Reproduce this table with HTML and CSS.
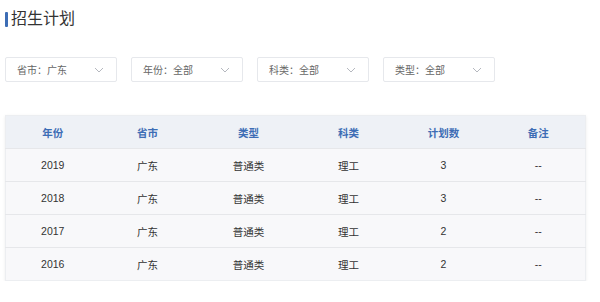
FILE: index.html
```html
<!DOCTYPE html>
<html lang="zh">
<head>
<meta charset="utf-8">
<link rel="stylesheet" href="styles.css">
</head>
<body>
<div class="page">
  <h1 class="title">招生计划</h1>
  <div class="filters">
    <div class="select"><span>省市：广东</span><svg class="chev" viewBox="0 0 10 6" width="10" height="6"><path d="M1 1l4 4 4-4" fill="none" stroke="#b5b8bf" stroke-width="1"/></svg></div>
    <div class="select"><span>年份：全部</span><svg class="chev" viewBox="0 0 10 6" width="10" height="6"><path d="M1 1l4 4 4-4" fill="none" stroke="#b5b8bf" stroke-width="1"/></svg></div>
    <div class="select"><span>科类：全部</span><svg class="chev" viewBox="0 0 10 6" width="10" height="6"><path d="M1 1l4 4 4-4" fill="none" stroke="#b5b8bf" stroke-width="1"/></svg></div>
    <div class="select"><span>类型：全部</span><svg class="chev" viewBox="0 0 10 6" width="10" height="6"><path d="M1 1l4 4 4-4" fill="none" stroke="#b5b8bf" stroke-width="1"/></svg></div>
  </div>
  <table class="plan">
    <colgroup>
      <col class="c-a"><col class="c-b"><col class="c-c"><col class="c-a"><col class="c-b"><col class="c-a">
    </colgroup>
    <thead>
      <tr><th>年份</th><th>省市</th><th>类型</th><th>科类</th><th>计划数</th><th>备注</th></tr>
    </thead>
    <tbody>
      <tr><td>2019</td><td>广东</td><td>普通类</td><td>理工</td><td>3</td><td>--</td></tr>
      <tr><td>2018</td><td>广东</td><td>普通类</td><td>理工</td><td>3</td><td>--</td></tr>
      <tr><td>2017</td><td>广东</td><td>普通类</td><td>理工</td><td>2</td><td>--</td></tr>
      <tr><td>2016</td><td>广东</td><td>普通类</td><td>理工</td><td>2</td><td>--</td></tr>
    </tbody>
  </table>
</div>
</body>
</html>
```

FILE: styles.css
```css
* { box-sizing: border-box; }
html, body { margin: 0; padding: 0; background: #fff; }
body {
  font-family: "Liberation Sans", "Noto Sans CJK SC", sans-serif;
  color: #333;
}
.page { padding: 9px 15px 0 5px; }
.title {
  margin: 0;
  font-size: 16px;
  font-weight: normal;
  line-height: 20px;
  color: #333;
  display: flex;
  align-items: center;
  gap: 3px;
}
.title::before {
  content: "";
  width: 3px;
  height: 15px;
  background: #3d6db5;
  border-radius: 1px;
}
.filters {
  display: flex;
  gap: 14px;
  margin-top: 28px;
}
.select {
  width: 112px;
  height: 25px;
  border: 1px solid #e6e8ec;
  border-radius: 2px;
  display: flex;
  align-items: center;
  justify-content: space-between;
  padding: 0 12px 0 11px;
  font-size: 10px;
  color: #666;
  background: #fff;
}
.chev { display: block; }
.plan {
  margin-top: 33px;
  width: 580px;
  border-collapse: collapse;
  table-layout: fixed;
  font-size: 10.5px;
  box-shadow: 0 1px 3px rgba(0,0,0,0.08);
  border: 1px solid #eceef1;
}
.c-a { width: 94px; }
.c-b { width: 96px; }
.c-c { width: 106px; }
.plan th {
  height: 33px;
  background: #eef1f6;
  color: #3d6db5;
  font-weight: bold;
  text-align: center;
  padding: 0;
}
.plan td {
  height: 33px;
  text-align: center;
  background: #f8f8fa;
  border-top: 1px solid #e6e7ea;
  color: #333;
  padding: 0;
}
```
